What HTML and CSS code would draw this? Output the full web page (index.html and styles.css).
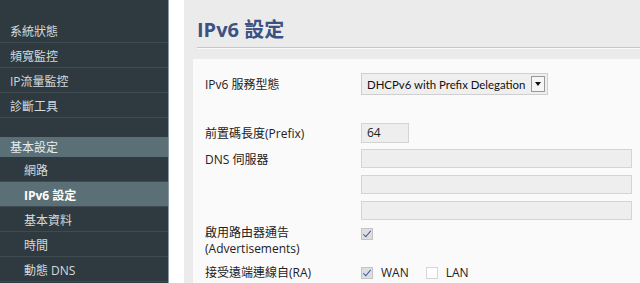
FILE: index.html
```html
<!DOCTYPE html>
<html lang="zh-Hant">
<head>
  <meta charset="UTF-8" />
  <title>IPv6 設定</title>
  <link rel="stylesheet" href="styles.css">
</head>
<body>
  <!-- Menu -->
  <nav class="menu">
    <a class="item first">系統狀態</a>
    <a class="item">頻寬監控</a>
    <a class="item">IP流量監控</a>
    <a class="item">診斷工具</a>
    <div class="spacer"></div>
    <a class="item group">基本設定</a>
    <a class="item sub">網路</a>
    <a class="item sub active">IPv6 設定</a>
    <a class="item sub">基本資料</a>
    <a class="item sub">時間</a>
    <a class="item sub">動態 DNS</a>
  </nav>

  <main class="main">
    <div class="panel">
      <h1 class="title">IPv6 設定</h1>

      <div class="card">
        <div class="row row-type">
          <label class="label">IPv6 服務型態</label>
          <div class="select">
            <span class="value">DHCPv6 with Prefix Delegation</span>
            <span class="arrow"></span>
          </div>
        </div>

        <div class="row row-prefix">
          <label class="label">前置碼長度(Prefix)</label>
          <div class="input short">64</div>
        </div>

        <div class="row row-dns">
          <label class="label">DNS 伺服器</label>
          <div class="stack">
            <div class="input wide"></div>
            <div class="input wide"></div>
            <div class="input wide"></div>
          </div>
        </div>

        <div class="row row-adv">
          <label class="label">啟用路由器通告<br>(Advertisements)</label>
          <span class="check on"></span>
        </div>

        <div class="row row-ra">
          <label class="label">接受遠端連線自(RA)</label>
          <span class="check on"></span><span class="opt">WAN</span>
          <span class="check"></span><span class="opt">LAN</span>
        </div>
      </div>
    </div>
  </main>
</body>
</html>
```

FILE: styles.css
```css
html, body {
  margin: 0;
  height: 100%;
}

body {
  display: flex;
  overflow: hidden;
  font-family: "Open Sans", "Noto Sans CJK TC", sans-serif;
  font-size: 12px;
  background: #fff;
}

/* sidebar */
.menu {
  width: 168px;
  flex-shrink: 0;
  background: #2e3a40;
  border-right: 1px solid #8d9ca3;
  padding-top: 18px;
  display: flex;
  flex-direction: column;
}

.item {
  display: block;
  height: 21px;
  line-height: 21px;
  padding: 3px 0 0 10px;
  color: #d3dadd;
  border-bottom: 1px solid #3e4b51;
}

.spacer {
  height: 19px;
}

.item.group {
  height: 19px;
  line-height: 19px;
  padding-top: 1px;
  background: #5a7076;
  border-bottom: none;
  color: #e8edef;
}

.item.sub { padding-left: 24px; }

.item.active {
  background: #5a7076;
  color: #fff;
  font-weight: bold;
}

/* content */
.main {
  flex: 1;
  padding-left: 15px;
}

.panel {
  height: 100%;
  background: #ebebeb;
  display: flex;
  flex-direction: column;
}

.title {
  margin: 0 0 0 13px;
  height: 47px;
  line-height: 60px;
  font-size: 20px;
  font-weight: bold;
  color: #3b5283;
  border-bottom: 1px solid #c8c8c8;
  box-shadow: 0 1px 0 #f8f8f8;
}

.card {
  flex: 1;
  margin: 11px 0 0 9px;
  background: #fafafa;
  padding: 14px 0 0 12px;
  color: #222;
}

.row {
  display: flex;
  align-items: center;
}

.label {
  width: 156px;
  flex-shrink: 0;
  line-height: 15px;
}

.select {
  width: 178px;
  height: 20px;
  border: 1px solid #cfcfcf;
  background: #efefef;
  display: flex;
  align-items: center;
  justify-content: space-between;
  gap: 4px;
  padding: 0 2px 0 5px;
  color: #111;
  white-space: nowrap;
}

.value {
  font-family: "Lato", "Open Sans", sans-serif;
  font-size: 11.4px;
}

.arrow {
  flex-shrink: 0;
  width: 12px;
  height: 14px;
  border: 1px solid #999;
  background: #f6f6f6;
  position: relative;
}

.arrow::after {
  content: "";
  position: absolute;
  left: 3px;
  top: 5px;
  border: 3px solid transparent;
  border-top: 4px solid #111;
  border-bottom: none;
}

.input {
  height: 18px;
  line-height: 18px;
  border: 1px solid #d4d4d4;
  background: #eeeeee;
  padding-left: 5px;
  box-sizing: content-box;
}

.input.short { width: 41px; }
.input.wide { width: 264px; height: 17px; }

.row-prefix { margin-top: 28px; }

.row-dns {
  margin-top: 6px;
  align-items: flex-start;
}
.row-dns .label { margin-top: 3px; }

.stack {
  display: flex;
  flex-direction: column;
  gap: 7px;
}

.row-adv {
  margin-top: 5px;
  align-items: flex-start;
}
.row-adv .label { line-height: 16px; }
.row-adv .check { margin-top: 3px; }

.row-ra { margin-top: 7px; }

.check {
  width: 10px;
  height: 10px;
  border: 1px solid #d6d6d6;
  background: #fff;
  position: relative;
}

.check.on {
  background: #dedede;
  border-color: #c4c4c4;
}

.check.on::after {
  content: "";
  position: absolute;
  left: 3px;
  top: 0;
  width: 3px;
  height: 7px;
  border: solid #3a5aa8;
  border-width: 0 1px 1px 0;
  transform: rotate(40deg);
}

.opt {
  margin: 0 17px 0 8px;
}
```
